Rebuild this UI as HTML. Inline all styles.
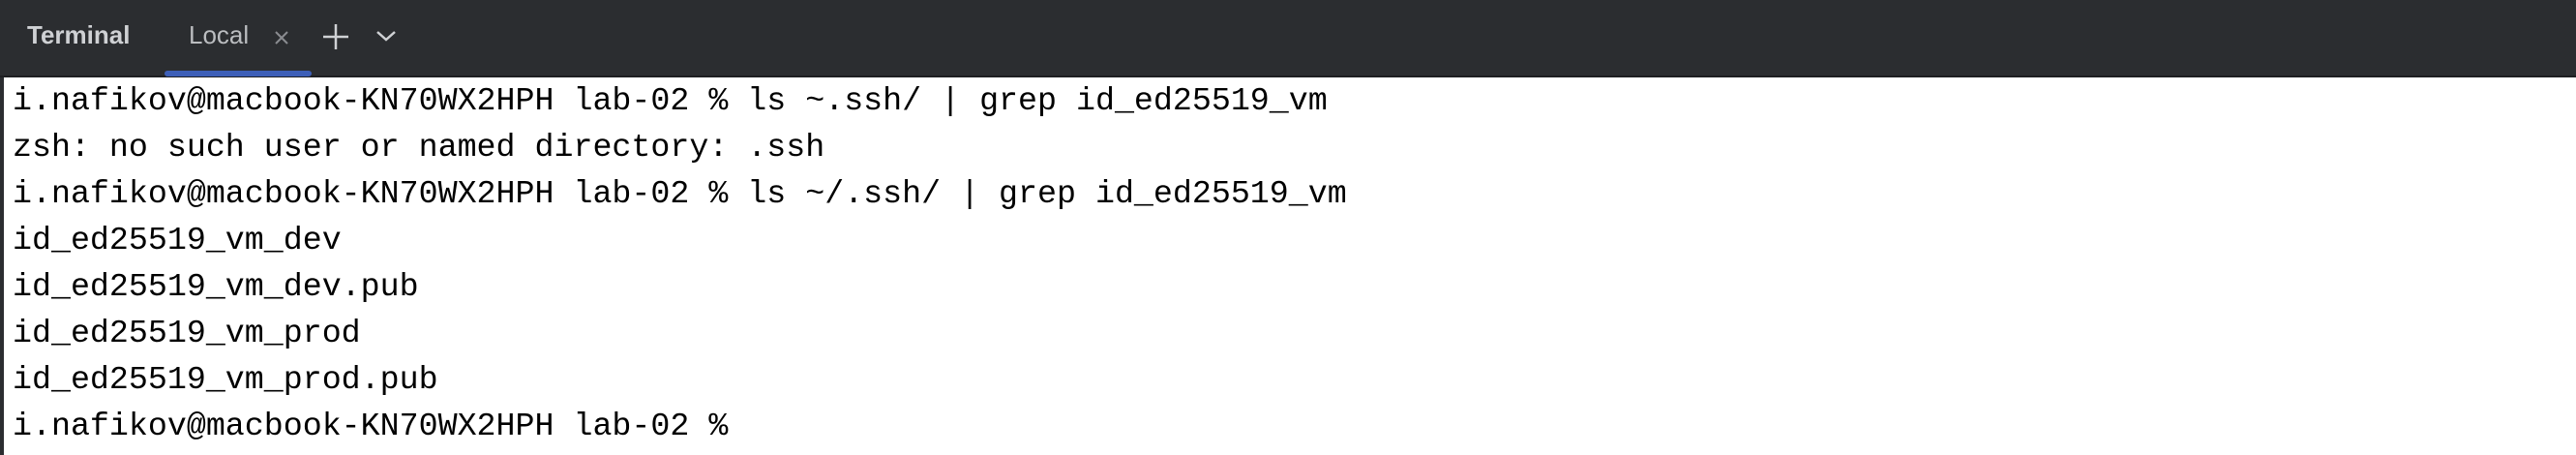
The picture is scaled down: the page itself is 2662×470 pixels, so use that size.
<!DOCTYPE html>
<html><head><style>
html,body{margin:0;padding:0;width:2662px;height:470px;overflow:hidden;background:#fff}
.hdr{position:absolute;left:0;top:0;width:2662px;height:78px;background:#2b2d30;border-bottom:2px solid #1e1f22}
.t{position:absolute;top:21px;font-family:"Liberation Sans",sans-serif;font-size:26px;color:#cfd1d4}
.ul{position:absolute;left:170px;top:73px;width:152px;height:6px;border-radius:3px;background:#3d5fb8}
.lb{position:absolute;left:0;top:80px;width:4px;height:390px;background:#2b2d30}
.term{position:absolute;left:13px;top:80px;font-family:"Liberation Mono",monospace;font-size:33.3px;line-height:48px;color:#000;white-space:pre}
</style></head><body>
<div class="hdr">
<div class="t" style="left:28px;font-weight:bold">Terminal</div>
<div class="t" style="left:195px;color:#bbbdc0">Local</div>
<svg style="position:absolute;left:283px;top:31px" width="16" height="16"><path d="M2 2L14 14M14 2L2 14" stroke="#8a8c90" stroke-width="2"/></svg>
<svg style="position:absolute;left:332px;top:23px" width="30" height="30"><path d="M15 2V28M2 15H28" stroke="#cfd1d4" stroke-width="2.5"/></svg>
<svg style="position:absolute;left:388px;top:30px" width="22" height="14"><path d="M2 3L11 11L20 3" stroke="#cfd1d4" stroke-width="2.5" fill="none"/></svg>
<div class="ul"></div>
</div>
<div class="lb"></div>
<div class="term">i.nafikov@macbook-KN70WX2HPH lab-02 % ls ~.ssh/ | grep id_ed25519_vm
zsh: no such user or named directory: .ssh
i.nafikov@macbook-KN70WX2HPH lab-02 % ls ~/.ssh/ | grep id_ed25519_vm
id_ed25519_vm_dev
id_ed25519_vm_dev.pub
id_ed25519_vm_prod
id_ed25519_vm_prod.pub
i.nafikov@macbook-KN70WX2HPH lab-02 %</div>
</body></html>
